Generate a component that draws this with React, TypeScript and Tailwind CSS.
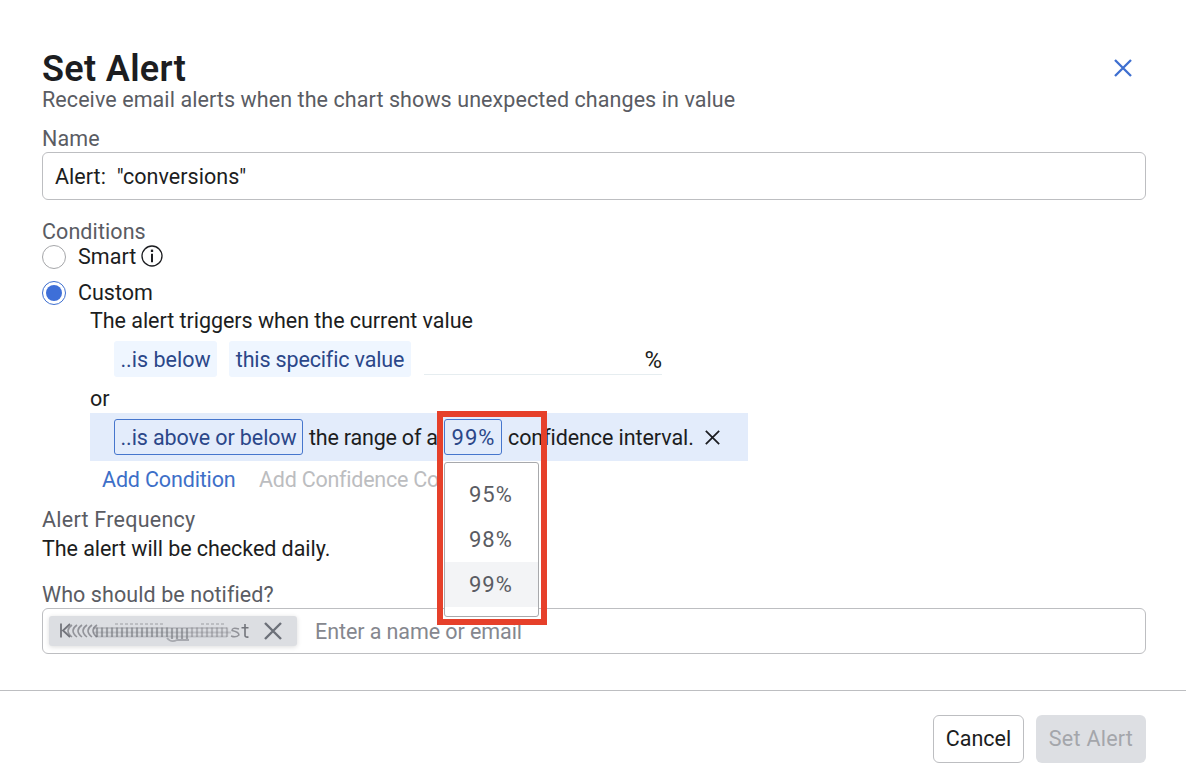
import React from "react";

function Cross({ className, weight }: { className: string; weight: number }) {
  return (
    <svg viewBox="0 0 18 18" className={className} fill="none" stroke="currentColor" strokeWidth={weight}>
      <path d="M1 1 17 17M17 1 1 17" />
    </svg>
  );
}

function InfoIcon() {
  return (
    <svg viewBox="0 0 22 22" className="-mt-0.5 ml-[5px] h-[22px] w-[22px] shrink-0" fill="none" stroke="currentColor">
      <circle cx="11" cy="11" r="10" strokeWidth="1.3" />
      <path d="M11 8.8V17.2" strokeWidth="2" />
      <path d="M11 4.6V7" strokeWidth="2.3" />
    </svg>
  );
}

const smearArcs = [7, 12, 17, 22, 27, 32];
const smearBars = Array.from({ length: 27 }, (_, i) => 38 + i * 5);

function Smear() {
  return (
    <svg viewBox="0 0 190 26" className="h-[26px] w-[190px] shrink-0 text-[#72747b]" fill="none" stroke="currentColor">
      <path d="M2 5.5V19.5M11 6 4 12.5 11 19" strokeWidth="1.8" />
      <g className="blur-[0.6px]">
        {smearArcs.map((x) => (
          <path key={x} d={`M${x + 6} 7 Q${x - 2} 12.5 ${x + 6} 19`} strokeWidth="1.6" opacity="0.7" />
        ))}
        {smearBars.map((x) => (
          <path key={x} d={x > 108 && x < 132 ? `M${x} 10V21` : `M${x} 9.5V19`} strokeWidth="2.2" opacity={x > 130 ? 0.4 : 0.6} />
        ))}
        <path d="M34 10H168M34 14.5H172M36 18.5H168" strokeWidth="2" opacity="0.28" />
        <path d="M56 6H104M142 6H166" strokeWidth="1.5" strokeDasharray="3 2" opacity="0.4" />
        <path d="M108 20Q112 25 118 22H130" strokeWidth="1.8" opacity="0.5" />
        <path d="M180 11Q173 9 173 12.5 180 14 180 17 177 20 172 18" strokeWidth="1.4" opacity="0.7" />
      </g>
      <path d="M186 6V17.5Q186 19.5 189.5 19M182.5 9.8H189.5" strokeWidth="1.6" />
    </svg>
  );
}

const levels = ["95%", "98%", "99%"];

export default function App() {
  return (
    <div className="flex h-[780px] w-[1186px] flex-col overflow-hidden bg-white font-['Roboto',sans-serif] text-[21.5px] leading-6 whitespace-nowrap text-[#1c1d21]">
      <main className="flex h-[690px] flex-col pt-[47px] pr-10 pl-[42px]">
        <header className="flex h-11 items-center justify-between pr-[14px]">
          <h1 className="-mt-px text-[36px] leading-[44px] font-semibold tracking-[0.35px]">Set Alert</h1>
          <Cross weight={2.3} className="-mt-[3px] h-[18px] w-[18px] text-[#3e6fd0]" />
        </header>
        <p className="mt-[-3px] tracking-[0.08px] text-[#5a5c63]">Receive email alerts when the chart shows unexpected changes in value</p>

        <label className="mt-[15px] tracking-[0.1px] text-[#5a5c63]">Name</label>
        <div className="mt-px flex h-12 items-center rounded-[6px] border border-[#bdbec1] px-3 pt-px tracking-[0.04px] whitespace-pre">{'Alert:  "conversions"'}</div>

        <div className="mt-5 tracking-[0.08px] text-[#5a5c63]">Conditions</div>
        <div className="mt-px flex h-6 items-center">
          <span className="h-6 w-6 rounded-full border border-[#a5a6a9]" />
          <span className="ml-3 tracking-[0.05px]">Smart</span>
          <InfoIcon />
        </div>
        <div className="mt-3 flex h-6 items-center">
          <span className="flex h-6 w-6 items-center justify-center rounded-full border border-[#3e6fd0]">
            <span className="h-4 w-4 rounded-full bg-[#3e6fd8]" />
          </span>
          <span className="ml-3">Custom</span>
        </div>

        <section className="flex flex-col pl-12">
          <div className="mt-1 tracking-[-0.04px]">The alert triggers when the current value</div>
          <div className="mt-2 flex h-9 pl-6">
            <span className="flex w-[103px] items-center justify-center rounded-[3px] bg-[#eff6ff] pt-px text-[#2b4789]">..is below</span>
            <span className="ml-3 flex w-[182px] items-center justify-center rounded-[3px] bg-[#eff6ff] pt-px tracking-[-0.15px] text-[#2b4789]">this specific value</span>
            <span className="ml-[13px] flex h-[34px] w-[238px] items-center justify-end border-b border-[#e6edf0] pt-[5px] text-[24px]">%</span>
          </div>
          <div className="mt-[10px] tracking-[-0.1px]">or</div>
          <div className="mt-[2px] flex h-12 w-[658px] items-center bg-[#e3ecfb] pl-6">
            <span className="flex h-9 w-[189px] items-center justify-center rounded-[3px] border border-[#4676cd] pt-px tracking-[-0.1px] text-[#2b4789]">..is above or below</span>
            <span className="ml-1.5 w-[135px] pt-px tracking-[-0.2px]">the range of a</span>
            <span className="relative flex h-9 w-[58px] items-center justify-center rounded-[3px] border border-[#4676cd] text-[22px] tracking-[1px] text-[#2b4789]">
              <span className="-mr-[1px] pt-px">99%</span>
              <span className="absolute top-[42px] -left-px z-10 flex w-[95px] flex-col rounded-[3px] border border-[#a8a9ac] bg-white py-[9px] text-[#5a5c63]">
                {levels.map((level) => (
                  <span key={level} className={level === "99%" ? "flex h-[45px] items-center bg-[#f3f4f6] pl-6" : "flex h-[45px] items-center pl-6"}>{level}</span>
                ))}
              </span>
              <span className="absolute -top-[9px] -left-[8px] z-20 h-[214px] w-[110px] border-[6px] border-[#e6402a]" />
            </span>
            <span className="ml-1.5 w-[197px] pt-px tracking-[-0.08px]">confidence interval.</span>
            <Cross weight={2.1} className="h-[15px] w-[15px]" />
          </div>
          <div className="mt-[7px] flex pl-3">
            <span className="w-[157px] tracking-[-0.15px] text-[#3e6fc8]">Add Condition</span>
            <span className="tracking-[-0.24px] text-[#bcbdc0]">Add Confidence Co</span>
          </div>
        </section>

        <div className="mt-4 tracking-[0.25px] text-[#5a5c63]">Alert Frequency</div>
        <div className="mt-[5px] tracking-[-0.06px]">The alert will be checked daily.</div>
        <label className="mt-[22px] tracking-[0.08px] text-[#5a5c63]">Who should be notified?</label>
        <div className="mt-px flex h-[46px] shrink-0 items-center rounded-[6px] border border-[#bdbec1] pl-1.5">
          <span className="flex h-[30px] w-[248px] items-center rounded-[3px] bg-[#dcdee2] pl-[10px] shadow-[0_1px_5px_rgba(0,0,0,0.14)]">
            <Smear />
            <Cross weight={2.4} className="ml-[15px] h-[18px] w-[18px] shrink-0 text-[#6c7079]" />
          </span>
          <span className="ml-[18px] pt-px tracking-[-0.08px] text-[#85878e]">Enter a name or email</span>
        </div>
      </main>
      <footer className="flex h-[90px] justify-end gap-3 border-t border-[#bdbec1] pt-6 pr-10">
        <button className="h-12 w-[91px] rounded-[6px] border border-[#bdbec1]">Cancel</button>
        <button className="h-12 w-[110px] rounded-[6px] bg-[#dddfe3] tracking-[0.25px] text-[#a4a6ab]">Set Alert</button>
      </footer>
    </div>
  );
}
